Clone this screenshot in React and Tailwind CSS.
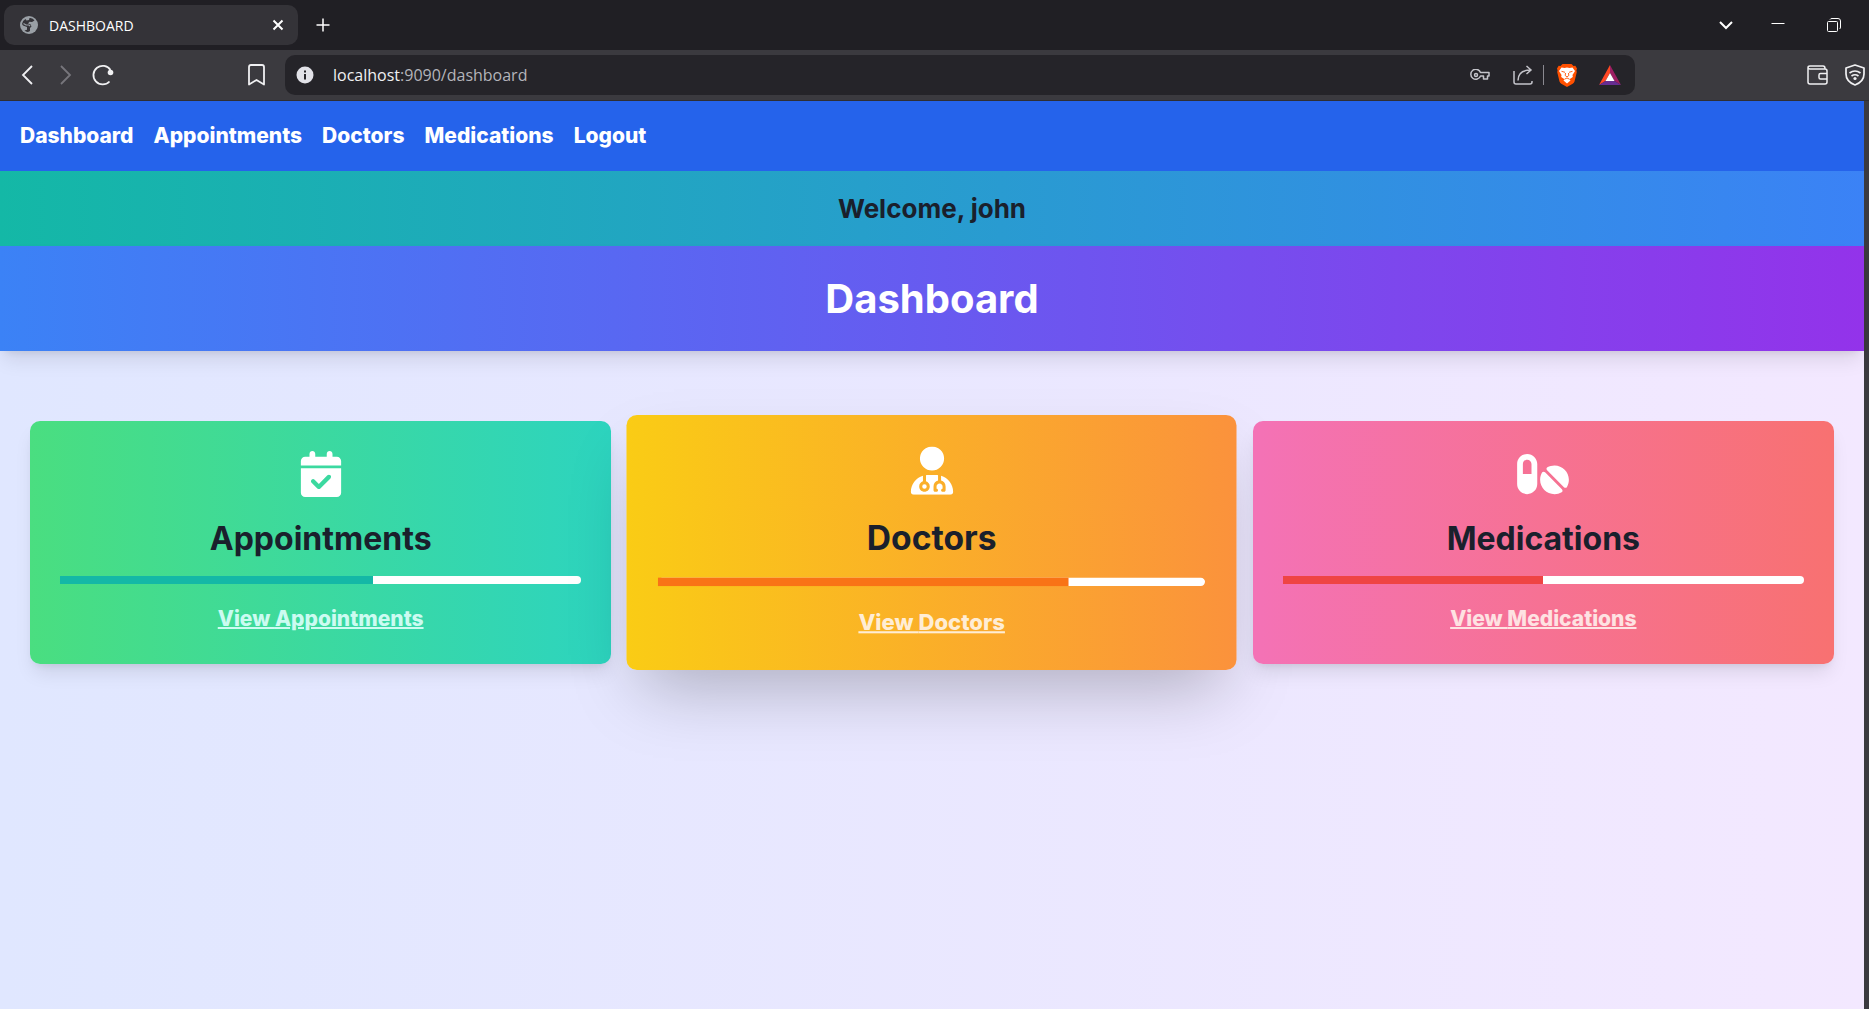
import { FaCalendarCheck, FaUserDoctor, FaPills } from "react-icons/fa6";

function TabStrip() {
  return (
    <div className="flex h-[50px] items-center bg-[#201f24] pl-1">
      <div className="flex h-10 w-[294px] items-center rounded-[10px] bg-[#343338] pr-3.5 pl-4 text-white">
        <svg viewBox="0 0 18 18" className="size-[18px]" aria-hidden="true">
          <circle cx="9" cy="9" r="9" fill="#9aa0a6" />
          <path d="M9.500 2Q13 1.600 14.500 4.500L12 6 9.500 5.800 8 7.500l2.500.8 1 2.200-1.500 1.500V15Q7 17 4.500 14.500L7 13.800V11L3 9.500 2 8Q2.500 4.500 5.500 3L6.500 4.500 9 4z" fill="#343338" />
          <path d="M3.500 7.500L6 9h3l1.200 1.200" fill="none" stroke="#9aa0a6" strokeWidth="1.200" />
        </svg>
        <span className="ml-[11px] flex-1 text-[14px]">DASHBOARD</span>
        <button type="button" aria-label="Close tab">
          <svg viewBox="0 0 12 12" className="size-3" fill="none" stroke="currentColor" strokeWidth="2">
            <path d="M1.500 1.500l9 9M10.500 1.500l-9 9" />
          </svg>
        </button>
      </div>
      <button type="button" aria-label="New tab" className="ml-[18px] text-white">
        <svg viewBox="0 0 14 14" className="size-3.5" fill="none" stroke="currentColor" strokeWidth="1.500">
          <path d="M7 0.500v13M0.500 7h13" />
        </svg>
      </button>
      <div className="ml-auto flex items-center gap-[38px] pr-7 text-white">
        <button type="button" aria-label="Search tabs">
          <svg viewBox="0 0 14 14" className="size-3.5" fill="none" stroke="currentColor" strokeWidth="2">
            <path d="M1 4l6 6 6-6" />
          </svg>
        </button>
        <button type="button" aria-label="Minimise">
          <svg viewBox="0 0 14 14" className="size-3.5" fill="none" stroke="currentColor">
            <path d="M0.500 5.500h13" />
          </svg>
        </button>
        <button type="button" aria-label="Restore" className="ml-1">
          <svg viewBox="0 0 14 14" className="size-3.5" fill="none" stroke="currentColor">
            <rect x="0.500" y="3.500" width="10" height="10" rx="1" />
            <path d="M3 1.500Q3.500 .5 5 .5h6q2.500 0 2.500 2.500v6q0 1.500-1 2" />
          </svg>
        </button>
      </div>
    </div>
  );
}

function Toolbar() {
  return (
    <div className="flex h-[51px] items-center border-b border-[#2f2e33] bg-[#3b3a3f] pr-1 pl-[21px] text-[#f0f0f2]">
      <button type="button" aria-label="Back">
        <svg viewBox="0 0 12 20" className="h-5 w-3" fill="none" stroke="currentColor" strokeWidth="1.800">
          <path d="M11 1L2 10l9 9" />
        </svg>
      </button>
      <button type="button" aria-label="Forward" className="ml-[27px] text-[#77767c]">
        <svg viewBox="0 0 12 20" className="h-5 w-3" fill="none" stroke="currentColor" strokeWidth="1.800">
          <path d="M1 1l9 9-9 9" />
        </svg>
      </button>
      <button type="button" aria-label="Reload" className="ml-5">
        <svg viewBox="0 0 22 22" className="size-[22px]" fill="none" stroke="currentColor" strokeWidth="1.800">
          <path d="M17.500 17.500A9.300 9.300 0 1 1 18.500 6" />
          <circle cx="18.500" cy="8.500" r="2.800" fill="currentColor" stroke="none" />
        </svg>
      </button>
      <button type="button" aria-label="Bookmark" className="ml-[134px]">
        <svg viewBox="0 0 17 22" className="h-[22px] w-[17px]" fill="none" stroke="currentColor" strokeWidth="1.800">
          <path d="M1 20V3q0-2 2-2h11q2 0 2 2v17.500l-7.500-4.500L1 20.500z" strokeLinejoin="round" />
        </svg>
      </button>
      <div className="ml-5 flex h-10 w-[1350px] shrink items-center rounded-[10px] bg-[#252429] pr-3.5 pl-[11px]">
        <svg viewBox="0 0 18 18" className="size-[18px]" aria-hidden="true">
          <circle cx="9" cy="9" r="8.500" fill="#e2e2e8" />
          <path d="M9 8v5.500M9 4.500v2" stroke="#252429" strokeWidth="2" />
        </svg>
        <div className="ml-[19px] flex-1 text-[16px] leading-6">
          <span className="text-[#f0f0f2]">localhost</span>
          <span className="text-[#b4b4ba]">:9090/dashboard</span>
        </div>
        <button type="button" aria-label="Passwords" className="text-[#c4c4ca]">
          <svg viewBox="0 0 20 12" className="h-3 w-5" fill="none" stroke="currentColor" strokeWidth="1.500">
            <path d="M10.500 3.500h8.500v3.500h-1.500v3h-4v-3h-3A5 5 0 1 1 10.500 3.500z" strokeLinejoin="round" />
            <circle cx="6" cy="6" r="1.500" />
          </svg>
        </button>
        <button type="button" aria-label="Share" className="ml-[23px] text-[#c4c4ca]">
          <svg viewBox="0 0 20 20" className="size-5" fill="none" stroke="currentColor" strokeWidth="1.500">
            <path d="M1 6v11q0 2 2 2h14q2 0 2-2v-1M5 15.500Q5 5 17.500 5M13.500 1l4.500 4-4.500 4" />
          </svg>
        </button>
        <span className="ml-2.5 h-5 w-px bg-[#8a8990]" />
        <button type="button" aria-label="Brave Shields" className="ml-[13px]">
          <svg viewBox="0 0 20 23" className="h-[23px] w-5">
            <path d="M5.500 0h9l2 2 1.800-.2L20 4.500l-.6 2 .4 1.500-2.300 9.500q-.5 1.500-1.800 2.300L10 23l-5.700-3.200q-1.300-.8-1.800-2.300L.2 8l.4-1.500-.6-2 1.700-2.700 1.800.2z" fill="#ff5000" />
            <path d="M4.500 3.500l3 .5 2.500-.5 2.500.5 3-.5L18 7l-2.500 4 .3 2-3.300 2.200 1 1.300L10 19.500l-3.500-3 1-1.300L4.200 13l.3-2L2 7z" fill="#fff" />
            <path d="M4.500 7.300l3.500 1M15.500 7.300l-3.500 1M8.500 9l-.3 2.500L10 13l1.800-1.500L11.500 9M7.500 15.200l2.500-1.200 2.500 1.200" fill="none" stroke="#ff5000" strokeWidth="0.900" />
          </svg>
        </button>
        <button type="button" aria-label="Brave Rewards" className="ml-[22px]">
          <svg viewBox="0 0 22 20" className="h-5 w-[22px]">
            <path d="M11 0L0 20l6.500-4L11 8z" fill="#ff4724" />
            <path d="M11 0l11 20-6.500-4L11 8z" fill="#9e1f63" />
            <path d="M0 20h22l-6.500-4h-9z" fill="#662d91" />
            <path d="M11 8l4.500 8h-9z" fill="#fff" />
          </svg>
        </button>
      </div>
      <button type="button" aria-label="Wallet" className="ml-auto">
        <svg viewBox="0 0 21 20" className="h-5 w-[21px]" fill="none" stroke="currentColor" strokeWidth="1.500">
          <path d="M1 2.800v14.200q0 2 2 2h15q2 0 2-2V6q0-2-2-2H3Q1 4 1 2.500T3 1h13q2 0 2 2.500M20 8.500h-6.500q-1.500 0-1.500 1.500v2.500q0 1.500 1.500 1.500H20" />
        </svg>
      </button>
      <button type="button" aria-label="VPN" className="ml-[17px]">
        <svg viewBox="0 0 20 22" className="h-[22px] w-5" fill="none" stroke="currentColor" strokeWidth="1.700">
          <path d="M10 1l9 3v6q0 7.500-9 11Q1 17.500 1 10V4z" strokeLinejoin="round" />
          <path d="M4.500 9q5.500-4 11 0M6.500 12q3.500-2.500 7 0" />
          <circle cx="10" cy="14.500" r="1.600" fill="currentColor" stroke="none" />
        </svg>
      </button>
    </div>
  );
}

const links = ["Dashboard", "Appointments", "Doctors", "Medications", "Logout"];

const cards = [
  {
    title: "Appointments",
    Icon: FaCalendarCheck,
    iconWidth: "w-[46px]",
    box: "from-[#4ade80] to-[#2dd4bf] shadow-[0_12px_19px_-4px_rgba(0,0,0,0.1),0_5px_8px_-5px_rgba(0,0,0,0.1)]",
    bar: "w-3/5 bg-[#14b8a6]",
    link: "text-[#ccfbf1]",
  },
  {
    title: "Doctors",
    Icon: FaUserDoctor,
    iconWidth: "w-[46px]",
    box: "scale-105 from-[#facc15] to-[#fb923c] shadow-[0_31px_62px_-15px_rgba(0,0,0,0.25)]",
    bar: "w-3/4 bg-[#f97316]",
    link: "text-[#ffedd5]",
  },
  {
    title: "Medications",
    Icon: FaPills,
    iconWidth: "w-[52px]",
    box: "from-[#f472b6] to-[#f87171] shadow-[0_12px_19px_-4px_rgba(0,0,0,0.1),0_5px_8px_-5px_rgba(0,0,0,0.1)]",
    bar: "w-1/2 bg-[#ef4444]",
    link: "text-[#fee2e2]",
  },
];

function Card({ title, Icon, iconWidth, box, bar, link }) {
  return (
    <section className={`relative flex flex-col items-center rounded-[10px] bg-linear-to-r/srgb p-[30px] ${box}`}>
      <Icon className={`h-[46px] text-white ${iconWidth}`} aria-hidden="true" />
      <h2 className="mt-[22px] text-[32px] leading-10 font-bold text-[#1a202c]">{title}</h2>
      <div className="mt-[17px] h-2 w-full rounded-[4px] bg-white">
        <div className={`h-2 ${bar}`} />
      </div>
      <a href="#" className={`mt-5 text-[21px] leading-[30px] font-extrabold underline decoration-2 ${link}`}>
        View {title}
      </a>
    </section>
  );
}

export default function App() {
  return (
    <div className="flex min-h-screen flex-col bg-[#3b3a3f] font-['Open_Sans',sans-serif]">
      <TabStrip />
      <Toolbar />
      <div className="mr-[5px] flex flex-1 flex-col bg-linear-to-r/srgb from-[#e0e7ff] to-[#f3e8ff] font-['Inter',sans-serif]">
        <nav className="flex h-[70px] items-center gap-5 bg-[#2563eb] px-5 text-[21px] font-extrabold text-white">
          {links.map((l) => (
            <a key={l} href="#">{l}</a>
          ))}
        </nav>
        <div className="flex h-[75px] items-center justify-center bg-linear-to-r/srgb from-[#14b8a6] to-[#3b82f6]">
          <p className="text-[26px] font-bold text-[#1a202c]">Welcome, john</p>
        </div>
        <header className="flex h-[105px] items-center justify-center bg-linear-to-r/srgb from-[#3b82f6] to-[#9333ea] shadow-[0_12px_19px_-4px_rgba(0,0,0,0.1),0_5px_8px_-5px_rgba(0,0,0,0.1)]">
          <h1 className="text-[40px] font-bold text-white">Dashboard</h1>
        </header>
        <main className="grid grid-cols-3 gap-[30px] px-[30px] pt-[70px] pb-[30px]">
          {cards.map((c) => (
            <Card key={c.title} {...c} />
          ))}
        </main>
      </div>
    </div>
  );
}
